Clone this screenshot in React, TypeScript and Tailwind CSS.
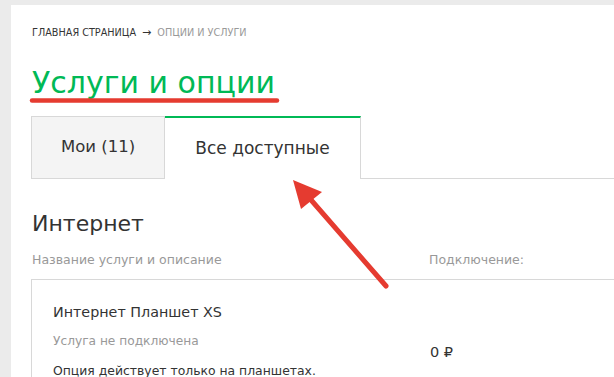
export default function App() {
  return (
    <div
      className="relative w-[614px] h-[377px] overflow-hidden bg-[#ebebeb] pl-[11px] pt-[5px]"
      style={{ fontFamily: '"DejaVu Sans", "Liberation Sans", Arial, sans-serif' }}
    >
      <div className="h-full bg-white pl-[20px] pt-[18px]">
        {/* breadcrumb */}
        <div className="flex items-center h-[20px] pl-[1px] text-[9.7px] uppercase">
          <span className="text-[#333]">Главная страница</span>
          <span className="mx-[6px] text-[#333] text-[11px]">→</span>
          <span className="text-[#999]">Опции и услуги</span>
        </div>

        {/* title */}
        <h1 className="mt-[18px] h-[44px] pl-[1px] text-[30px] leading-[44px] text-[#00b956]">
          Услуги и опции
        </h1>

        {/* tabs */}
        <div className="mt-[11px] flex h-[63px]">
          <div className="flex w-[134px] items-center justify-center border border-[#d8d8d8] bg-[#f4f4f4] text-[16.5px] text-[#333]">
            Мои (11)
          </div>
          <div className="flex w-[196px] items-center justify-center border-t-2 border-r border-t-[#00b956] border-r-[#d8d8d8] text-[17px] text-[#333]">
            Все доступные
          </div>
          <div className="flex-1 border-b border-[#d8d8d8]" />
        </div>

        {/* section */}
        <h2 className="mt-[30px] pl-[1px] text-[22px] leading-[30px] text-[#333]">Интернет</h2>
        <div className="mt-[7px] flex h-[28px] items-center text-[12.5px] text-[#999]">
          <span className="w-[398px] pl-[1px]">Название услуги и описание</span>
          <span>Подключение:</span>
        </div>

        <div className="mt-[5px] flex border-t border-l border-[#d8d8d8]">
          <div className="w-[398px] pl-[21px] pt-[22px]">
            <div className="text-[14.3px] leading-[20px] text-[#333]">Интернет Планшет XS</div>
            <div className="mt-[9px] text-[12.2px] leading-[20px] text-[#999]">Услуга не подключена</div>
            <div className="mt-[10px] text-[12.4px] leading-[20px] text-[#333]">
              Опция действует только на планшетах.
            </div>
          </div>
          <div className="pt-[62px] text-[14.5px] leading-[20px] text-[#333]">0 ₽</div>
        </div>
      </div>

      {/* annotations */}
      <svg className="absolute left-0 top-0 pointer-events-none" width="614" height="377">
        <line x1="32" y1="100.5" x2="277" y2="100.5" stroke="#e53b30" strokeWidth="4.5" strokeLinecap="round" />
        <line x1="386" y1="286" x2="305" y2="193" stroke="#e53b30" strokeWidth="5" strokeLinecap="round" />
        <polygon points="293,180 322,192 301,209" fill="#e53b30" />
      </svg>
    </div>
  );
}
